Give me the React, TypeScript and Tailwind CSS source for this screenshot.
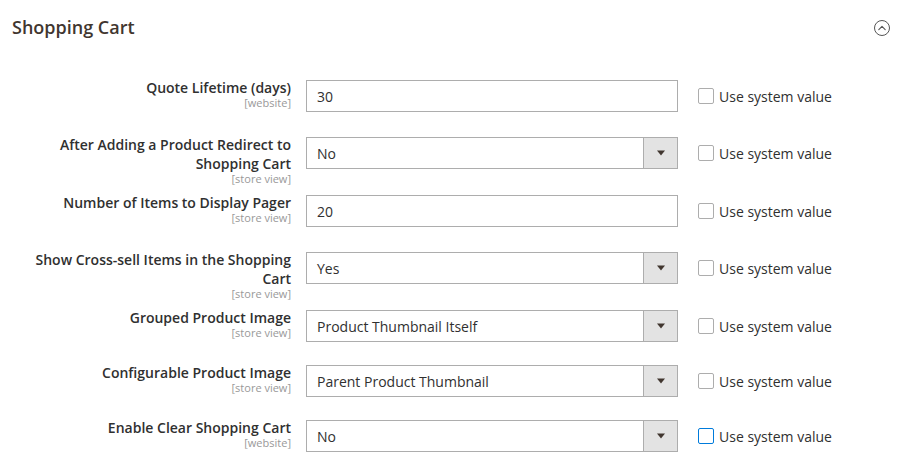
type Field = {
  label: string[];
  scope: string;
  kind: "input" | "select";
  value: string;
  height: string;
  focused?: boolean;
};

const fields: Field[] = [
  { label: ["Quote Lifetime (days)"], scope: "[website]", kind: "input", value: "30", height: "h-[57px]" },
  { label: ["After Adding a Product Redirect to", "Shopping Cart"], scope: "[store view]", kind: "select", value: "No", height: "h-[58px]" },
  { label: ["Number of Items to Display Pager"], scope: "[store view]", kind: "input", value: "20", height: "h-[57px]" },
  { label: ["Show Cross-sell Items in the Shopping", "Cart"], scope: "[store view]", kind: "select", value: "Yes", height: "h-[58px]" },
  { label: ["Grouped Product Image"], scope: "[store view]", kind: "select", value: "Product Thumbnail Itself", height: "h-[55px]" },
  { label: ["Configurable Product Image"], scope: "[store view]", kind: "select", value: "Parent Product Thumbnail", height: "h-[55px]" },
  { label: ["Enable Clear Shopping Cart"], scope: "[website]", kind: "select", value: "No", height: "h-[54px]", focused: true },
];

function CollapseIcon() {
  return (
    <svg width="18" height="18" viewBox="0 0 18 18" fill="none">
      <circle cx="9" cy="9" r="7.5" stroke="#555" strokeWidth="1" />
      <path d="M5.8 10.6 L9 7.4 L12.2 10.6" stroke="#555" strokeWidth="1.1" strokeLinecap="round" strokeLinejoin="round" />
    </svg>
  );
}

function Control({ field }: { field: Field }) {
  if (field.kind === "input") {
    return (
      <div className="w-[372px] h-[32px] border border-[#adadad] bg-white flex items-center pl-[10px] text-[14px] text-[#303030]">
        {field.value}
      </div>
    );
  }
  return (
    <div className="w-[372px] h-[32px] border border-[#adadad] bg-white flex items-stretch text-[14px] text-[#303030]">
      <div className="flex-1 flex items-center pl-[10px]">{field.value}</div>
      <div className="w-[34px] bg-[#e3e3e3] border-l border-[#adadad] flex items-center justify-center">
        <svg width="10" height="6" viewBox="0 0 10 6">
          <path d="M1 0.5 L9 0.5 L5 5.5 Z" fill="#41362f" />
        </svg>
      </div>
    </div>
  );
}

function Row({ field }: { field: Field }) {
  return (
    <div className={`flex items-start ${field.height}`}>
      <div className="w-[271px] ml-[20px] text-right -mt-[2px]">
        {field.label.map((line) => (
          <div key={line} className="text-[14px] leading-[19px] font-semibold text-[#303030]">
            {line}
          </div>
        ))}
        <div className="text-[11px] leading-[11px] text-[#999]">{field.scope}</div>
      </div>
      <div className="ml-[15px]">
        <Control field={field} />
      </div>
      <label className="ml-[20px] h-[32px] flex items-center gap-[5px] text-[14px] text-[#303030]">
        <span
          className={
            field.focused
              ? "w-[16px] h-[16px] rounded-[2px] border border-[#007bdb] bg-white"
              : "w-[16px] h-[16px] rounded-[2px] border border-[#adadad] bg-white"
          }
        />
        Use system value
      </label>
    </div>
  );
}

export default function App() {
  return (
    <div className="w-[914px] h-[474px] bg-white overflow-hidden font-['Open_Sans',sans-serif]">
      <div className="flex items-start justify-between pl-[12px] pr-[23px] pt-[14px] h-[80px]">
        <h2 className="text-[18px] leading-[26px] font-semibold text-[#41362f]">Shopping Cart</h2>
        <div className="pt-[5px]">
          <CollapseIcon />
        </div>
      </div>
      <div className="flex flex-col">
        {fields.map((f) => (
          <Row key={f.label.join(" ")} field={f} />
        ))}
      </div>
    </div>
  );
}
